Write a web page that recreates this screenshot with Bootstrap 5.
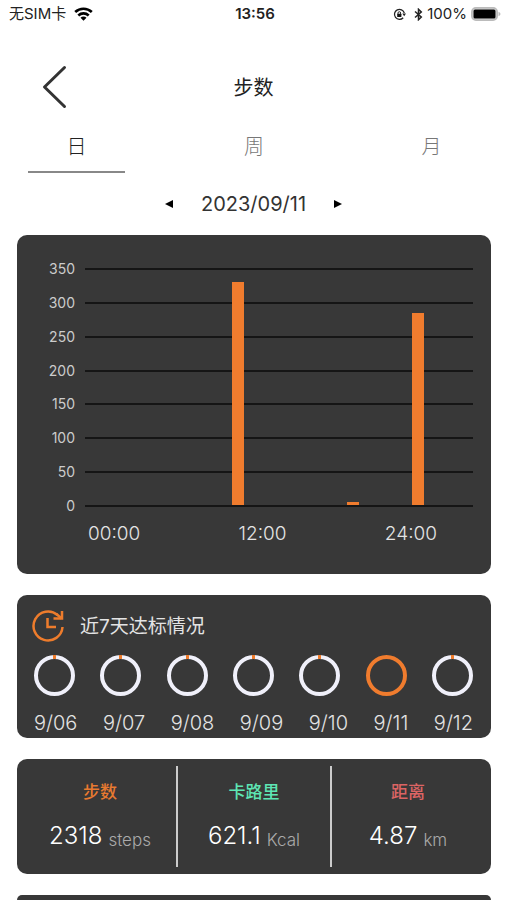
<!DOCTYPE html>
<html lang="zh-CN">
<head>
<meta charset="utf-8">
<meta name="viewport" content="width=device-width, initial-scale=1">
<title>步数</title>
<link href="https://cdn.jsdelivr.net/npm/bootstrap@5.3.0/dist/css/bootstrap.min.css" rel="stylesheet">
<style>
  body { font-family: Inter, "Noto Sans CJK SC", sans-serif; color: #222; background: #fff; }
  svg { display: block; }
  button { border: 0; background: none; padding: 0; color: inherit; }
  .status-bar { height: 28px; padding: 0 6px 0 9px; font-size: 15px; line-height: 28px; }
  .status-side { flex: 1 1 0; }
  .status-time { font-weight: 600; }
  .title-bar { height: 94px; padding: 24px 40px 0; }
  .title-bar h1 { padding-top: 2px; font-size: 20px; line-height: 28px; font-weight: 400; }
  .title-side { width: 28px; }
  .tabs { padding: 0 27px 0 28px; }
  .tab-btn { width: 97px; height: 51px; font-size: 20px; line-height: 28px; font-weight: 300; color: #777; border-bottom: 2px solid transparent; }
  .tab-btn.active { color: #222; border-bottom-color: #888; }
  .date-row { height: 62px; gap: 28px; font-size: 20px; line-height: 28px; font-weight: 400; color: #333; }
  .stack { padding: 0 16px 0 17px; gap: 21px; }
  .panel { background: #383838; color: #e4e4e4; border-radius: 10px; }
  .chart-panel { padding: 24px 18px 29px 28px; height: 339px; }
  .chart { gap: 10px; }
  .y-axis { width: 30px; height: 257px; font-size: 14px; line-height: 20px; color: #ccc; }
  .plot { height: 239px; margin-top: 9px; }
  .grid-line { height: 2px; background: #151515; }
  .bar { position: absolute; bottom: 2px; width: 12px; background: #f07c2e; }
  .x-axis { padding: 4px 36px 0 43px; font-size: 19px; line-height: 28px; font-weight: 300; }
  .week-panel { padding: 14px 18px 0 17px; height: 143px; }
  .week-title { gap: 16px; height: 34px; font-size: 19px; line-height: 28px; font-weight: 400; }
  .week-title svg { margin-left: -2px; }
  .week-title span { padding-top: 2px; }
  .rings { padding-top: 12px; }
  .days { padding-top: 13px; font-size: 20px; line-height: 28px; font-weight: 300; }
  .totals { padding: 7px; height: 115px; }
  .total { flex: 1 1 0; padding-top: 12px; }
  .total + .total { border-left: 2px solid #ccc; }
  .total h2 { font-size: 17px; line-height: 28px; font-weight: 500; }
  .total p { gap: 6px; padding-top: 12px; }
  .amount { font-size: 24px; line-height: 36px; font-weight: 300; color: #fff; }
  .unit { font-size: 17px; line-height: 28px; font-weight: 300; color: #aaa; }
  .steps { color: #e87a30; }
  .energy { color: #5ee6b4; }
  .distance { color: #dc6464; }
  .next-panel { border-bottom-left-radius: 0; border-bottom-right-radius: 0; }
</style>
</head>
<body>
<div class="vh-100 d-flex flex-column overflow-hidden">
  <header>
    <div class="status-bar d-flex align-items-center">
      <div class="status-side d-flex align-items-center gap-2">
        <span>无SIM卡</span>
        <svg width="19" height="14" viewBox="0 0 19 14" aria-hidden="true">
          <g fill="none" stroke="#000" stroke-width="2.6">
            <path d="M1.200 5C5.900 .6 13.100 .6 17.800 5"/>
            <path d="M4.300 8.500C7.300 5.700 11.700 5.700 14.700 8.500"/>
          </g>
          <path d="M9.500 13.700L6.500 10.700C8.300 9.200 10.700 9.200 12.500 10.700Z"/>
        </svg>
      </div>
      <span class="status-time">13:56</span>
      <div class="status-side d-flex align-items-center justify-content-end">
        <svg class="me-2" width="13" height="13" viewBox="0 0 13 13" aria-hidden="true">
          <path d="M11.300 5A5 5 0 1 0 10.200 9.700" fill="none" stroke="#222" stroke-width="1.300"/>
          <path d="M9.300 5.500H13L11.200 8.200Z" fill="#222"/>
          <rect x="4.200" y="5.800" width="4.200" height="3.300" rx=".5" fill="#111"/>
          <path d="M5 6V5a1.300 1.300 0 0 1 2.600 0V6" fill="none" stroke="#111" stroke-width=".9"/>
        </svg>
        <svg class="me-1" width="9" height="13" viewBox="0 0 9 13" aria-hidden="true">
          <path d="M1 3.500L7.300 9L4.500 11.700V1.300L7.300 4L1 9.500" fill="none" stroke="#222" stroke-width="1.500"/>
        </svg>
        <span class="me-1">100%</span>
        <svg width="30" height="14" viewBox="0 0 30 14" aria-hidden="true">
          <rect x=".9" y=".9" width="25.200" height="12.200" rx="4" fill="#ddd" stroke="#bbb" stroke-width="1.800"/>
          <rect x="2.500" y="2.500" width="22" height="9" rx="1.500" fill="#000"/>
          <path d="M27.500 4.700Q29.500 5.500 29.500 7T27.500 9.300Z" fill="#bbb"/>
        </svg>
      </div>
    </div>
    <div class="title-bar d-flex align-items-center justify-content-between">
      <button class="title-side" type="button" aria-label="返回">
        <svg width="28" height="44" viewBox="0 0 28 44" aria-hidden="true">
          <path d="M24.500 2.500L4.500 22L24.500 41.500" fill="none" stroke="#333" stroke-width="3" stroke-linecap="round" stroke-linejoin="round"/>
        </svg>
      </button>
      <h1 class="m-0">步数</h1>
      <span class="title-side"></span>
    </div>
    <nav class="tabs d-flex justify-content-between">
      <button class="tab-btn active" type="button">日</button>
      <button class="tab-btn" type="button">周</button>
      <button class="tab-btn" type="button">月</button>
    </nav>
    <div class="date-row d-flex align-items-center justify-content-center">
      <button type="button" aria-label="前一天"><svg width="8" height="8" viewBox="0 0 8 8"><path d="M8 0V8L0 4Z"/></svg></button>
      <span>2023/09/11</span>
      <button type="button" aria-label="后一天"><svg width="8" height="8" viewBox="0 0 8 8"><path d="M0 0V8L8 4Z"/></svg></button>
    </div>
  </header>

  <main class="stack d-flex flex-column flex-grow-1">
    <section class="panel chart-panel flex-shrink-0">
      <div class="chart d-flex">
        <div class="y-axis d-flex flex-column justify-content-between text-end">
          <span>350</span><span>300</span><span>250</span><span>200</span><span>150</span><span>100</span><span>50</span><span>0</span>
        </div>
        <div class="plot position-relative flex-grow-1 d-flex flex-column justify-content-between">
          <div class="grid-line"></div><div class="grid-line"></div><div class="grid-line"></div><div class="grid-line"></div>
          <div class="grid-line"></div><div class="grid-line"></div><div class="grid-line"></div><div class="grid-line"></div>
          <div class="bar" style="left:38%;height:93.5%"></div>
          <div class="bar" style="left:67.5%;height:1.3%"></div>
          <div class="bar" style="left:84.3%;height:80.5%"></div>
        </div>
      </div>
      <div class="x-axis d-flex justify-content-between">
        <span>00:00</span><span>12:00</span><span>24:00</span>
      </div>
    </section>

    <section class="panel week-panel flex-shrink-0">
      <div class="week-title d-flex align-items-center">
        <svg width="32" height="34" viewBox="0 0 32 34" aria-hidden="true">
          <g fill="none" stroke="#ee7c2c" stroke-width="2.500">
            <path d="M30.500 18A14.500 14.500 0 1 1 25.500 6"/>
            <path d="M21.500 9.500H30V2"/>
            <path d="M29.500 9.500L24.500 5"/>
            <path d="M15.500 9V18H24"/>
          </g>
        </svg>
        <span>近7天达标情况</span>
      </div>
      <svg width="0" height="0" class="position-absolute" aria-hidden="true">
        <symbol id="ring" viewBox="0 0 41 41">
          <circle cx="20.500" cy="20.500" r="18.500" fill="none" stroke="#f0f0fa" stroke-width="4"/>
          <path d="M19 2H22" stroke="#ee7c2c" stroke-width="4"/>
        </symbol>
        <symbol id="ring-full" viewBox="0 0 41 41">
          <circle cx="20.500" cy="20.500" r="18.500" fill="none" stroke="#f07c2e" stroke-width="4"/>
        </symbol>
      </svg>
      <div class="rings d-flex justify-content-between">
        <svg width="41" height="41"><use href="#ring"/></svg>
        <svg width="41" height="41"><use href="#ring"/></svg>
        <svg width="41" height="41"><use href="#ring"/></svg>
        <svg width="41" height="41"><use href="#ring"/></svg>
        <svg width="41" height="41"><use href="#ring"/></svg>
        <svg width="41" height="41"><use href="#ring-full"/></svg>
        <svg width="41" height="41"><use href="#ring"/></svg>
      </div>
      <div class="days d-flex justify-content-between">
        <span>9/06</span><span>9/07</span><span>9/08</span><span>9/09</span><span>9/10</span><span>9/11</span><span>9/12</span>
      </div>
    </section>

    <section class="panel totals d-flex flex-shrink-0 text-center">
      <div class="total">
        <h2 class="steps m-0">步数</h2>
        <p class="d-flex justify-content-center align-items-end m-0"><span class="amount">2318</span><span class="unit">steps</span></p>
      </div>
      <div class="total">
        <h2 class="energy m-0">卡路里</h2>
        <p class="d-flex justify-content-center align-items-end m-0"><span class="amount">621.1</span><span class="unit">Kcal</span></p>
      </div>
      <div class="total">
        <h2 class="distance m-0">距离</h2>
        <p class="d-flex justify-content-center align-items-end m-0"><span class="amount">4.87</span><span class="unit">km</span></p>
      </div>
    </section>

    <section class="panel next-panel flex-grow-1"></section>
  </main>
</div>
<script src="https://cdn.jsdelivr.net/npm/bootstrap@5.3.0/dist/js/bootstrap.bundle.min.js"></script>
</body>
</html>
